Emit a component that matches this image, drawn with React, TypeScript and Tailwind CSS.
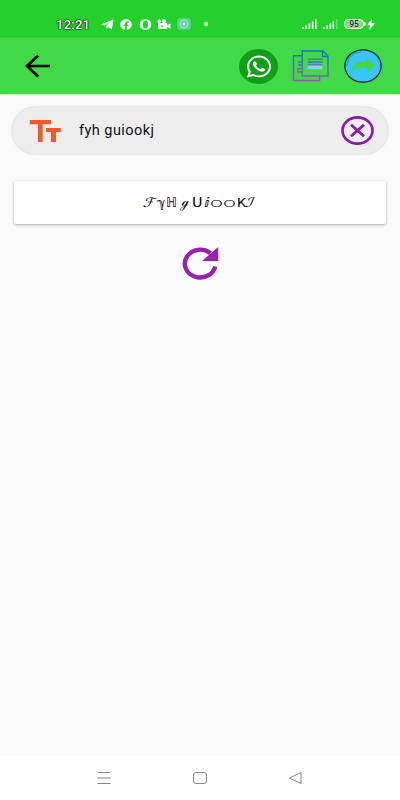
import React from 'react';
import { FaWhatsapp, FaFacebook } from 'react-icons/fa';

function StatusBar() {
  return (
    <div className="flex h-[38px] items-center bg-[#24d12c] pt-[10px] pl-[56px] text-white">
      <span className="w-[45px] text-[13px] leading-none font-medium tracking-[0.25px] whitespace-nowrap [text-shadow:0_0_1px_#000,0_0_1px_#000,0_0_2px_#000]">12:21</span>
      <svg className="h-[11px] w-[13px] shrink-0" viewBox="0 0 13 11" fill="#fff">
        <path d="M0 5.6 12.5 0.6 10.8 10.2 7.2 8.2 5.2 9.8 4.7 7.2 9.5 3 3.4 6.6Z" />
      </svg>
      <FaFacebook className="ml-[6px] h-[11px] w-[12px] shrink-0" preserveAspectRatio="none" />
      <svg className="ml-[7px] h-[11px] w-[13px] shrink-0" viewBox="0 0 13 11">
        <path fill="#fff" fillRule="evenodd" d="M6.5.2C10 .2 12.2 2.4 12.2 5.5S10 10.8 6.5 10.8.8 8.6.8 5.5 3 .2 6.5.2ZM6.5 1.5C4.7 1.5 3.8 3.2 3.8 5.5S4.7 9.5 6.5 9.5 9.2 7.8 9.2 5.5 8.3 1.5 6.5 1.5Z" />
      </svg>
      <svg className="ml-[5px] h-[11px] w-[14px] shrink-0" viewBox="0 0 14 11" fill="#fff">
        <circle cx="2.2" cy="2.2" r="1.7" /><circle cx="7" cy="2.2" r="2" />
        <path fillRule="evenodd" d="M1 4H10V6L13.5 4.4V9.6L10 8V10H1ZM4.5 6V8.4L7 7.2Z" />
      </svg>
      <svg className="ml-[6px] h-[12px] w-[14px] shrink-0" viewBox="0 0 14 12" fill="none">
        <rect x=".3" y=".3" width="13.2" height="11.4" rx="2.6" fill="#60cf9b" />
        <circle cx="7" cy="6" r="3.8" stroke="#a8ead0" />
        <path d="M7 4V8M5 6H9" stroke="#c9f5e5" />
      </svg>
      <i className="ml-[13px] h-[4px] w-[4px] shrink-0 rounded-full bg-[#e4ffe4]" />
      <svg className="ml-[94px] h-[10px] w-[36px] shrink-0" viewBox="0 0 36 10" fill="#e6ffe6">
        <path d="M0 8h1.6v2H0zM3.2 6.5h1.7V10H3.2zM6.5 4.5h1.7V10H6.5zM9.8 2.3h1.7V10H9.8zM13 .2h1.7V10H13zM21 8h1.6v2H21zM24.2 6.5h1.7V10h-1.7zM27.5 4.5h1.7V10h-1.7zM30.6 2.3h1.5V10h-1.5z" />
        <path fill="#65df69" d="M34 .2h1.6V10H34z" />
      </svg>
      <div className="ml-[6px] flex h-[10px] w-[20px] shrink-0 items-center justify-center rounded-[4px] border border-[#e6ffe6] bg-[#83df86] text-[8.5px] leading-none font-medium text-[#222] [text-shadow:0_0_1px_#fff]">95</div>
      <i className="h-[4px] w-[2px] shrink-0 rounded-r bg-[#d5ffd5]" />
      <svg className="ml-[1px] h-[11px] w-[8px] shrink-0" viewBox="0 0 8 11" fill="#fff"><path d="M5 0 0 6.2H3L2.2 11 8 4.3H4.4Z" /></svg>
    </div>
  );
}

function AppBar() {
  return (
    <header className="flex h-[56px] items-center bg-[#42d947] pl-[25px] shadow-[0_1px_2px_#b5f4ba]">
      <svg className="h-[24px] w-[26px]" viewBox="0 0 26 24" fill="none" stroke="#000" strokeWidth="2.7">
        <path d="M25 12H2M13.2 1.5 1.9 12 13.2 22.5" />
      </svg>
      <div className="ml-[188px] flex h-[35px] w-[39px] items-center justify-center rounded-[50%] bg-[#0f9f18]">
        <FaWhatsapp className="h-[25px] w-[24px] text-white" preserveAspectRatio="none" />
      </div>
      <svg className="ml-[14px] h-[32px] w-[37px]" viewBox="0 0 37 32" fill="none">
        <defs>
          <linearGradient id="paper" gradientUnits="userSpaceOnUse" x1="18" y1="0" x2="18" y2="32">
            <stop stopColor="#0875bd" /><stop offset=".5" stopColor="#526fbb" /><stop offset="1" stopColor="#a04fc0" />
          </linearGradient>
        </defs>
        <g stroke="url(#paper)" strokeWidth="1.4">
          <path d="M9.5 5.8H1.5V30.5H27.7V26.4M10.2 1H31L36 6V26H10.2ZM30.5 1V6.5H36" />
          <path d="M6 12H10M6 15H10M10 18.5H6V22H10" />
          <path d="M15.8 9.2H30.5M15.8 12H30.5M15.8 14.8H30.5" strokeWidth="1.3" />
        </g>
        <path d="M15.8 15.6H30.5V19.2H15.8Z" fill="#9bcce3" />
      </svg>
      <svg className="ml-[15px] h-[34px] w-[38px]" viewBox="0 0 38 34">
        <ellipse cx="19" cy="17" rx="18.1" ry="16.2" fill="#39c5f7" stroke="#172b31" strokeWidth="1.3" />
        <path d="M3 17C3 9 9 3 17 3" fill="none" stroke="#26a9b5" strokeWidth="1.5" />
        <path d="M7.5 22C9 14.5 14 12.2 22 13V9.5L31.5 16 23 22.8V19C17 18 12 19 7.5 22Z" fill="#42d947" />
      </svg>
    </header>
  );
}

function SearchField() {
  return (
    <div className="mx-[12px] mt-[13px] flex h-[47px] items-center rounded-full bg-[#ededed] pl-[17px] shadow-[0_0_2px_#bbb]">
      <svg className="h-[24px] w-[33px]" viewBox="0 0 33 24" fill="#f15a28">
        <path d="M.8 1H22V5.2H13.7V23H8.9V5.2H.8ZM17 9H31.8V13H27V23H22V13H17Z" />
      </svg>
      <span className="ml-[17px] w-[262px] pt-px text-[14.5px] leading-none tracking-[0.45px] text-[#111]">fyh guiookj</span>
      <svg className="h-[29px] w-[33px] shrink-0" viewBox="0 0 33 29" fill="none" stroke="#8d1ba4">
        <ellipse cx="16.5" cy="14.5" rx="15" ry="13.2" strokeWidth="2.7" />
        <path d="M10 8.7 23 20.3M23 8.7 10 20.3" strokeWidth="2.8" />
      </svg>
    </div>
  );
}

const letter = "inline-block shrink-0 origin-left whitespace-pre";

function StyledText() {
  return (
    <div className="mx-[14px] mt-[27px] flex h-[43px] items-center rounded-[2px] bg-white pl-[130px] font-['DejaVu_Sans',serif] text-[13px] leading-[18px] text-black shadow-[0_1px_3px_#aaa]">
      <span className={letter + " w-[13px] scale-x-110 -skew-x-[18deg]"}>ℱ</span>
      <span className={letter + " w-[9px] scale-x-90"}>ℽ</span>
      <span className={letter + " w-[15px]"}>ℍ </span>
      <span className={letter + " w-[11px] pb-[2px] text-[12px] scale-x-110 font-['DejaVu_Serif',serif]"}>ℊ</span>
      <span className={letter + " w-[12px] scale-x-110"}>ᑌ</span>
      <span className={letter + " w-[6px] scale-x-125"}>ⅈ</span>
      <span className={letter + " w-[13px] pb-[2px] text-[14.5px] scale-x-[1.6] font-[Lato,sans-serif] font-light"}>o</span>
      <span className={letter + " w-[14px] pb-[2px] text-[14.5px] scale-x-[1.6] font-[Lato,sans-serif] font-light"}>o</span>
      <span className={letter + " w-[9px] scale-x-110 font-[Roboto,sans-serif]"}>K</span>
      <span className={letter + " w-[12px] scale-x-125 -skew-x-[18deg]"}>ℐ</span>
    </div>
  );
}

export default function App() {
  return (
    <main className="flex h-[800px] w-[400px] flex-col overflow-hidden bg-[#fafafa] font-[Roboto,sans-serif]">
      <StatusBar />
      <AppBar />
      <SearchField />
      <StyledText />
      <svg className="mt-[22px] ml-[181px] h-[34px] w-[38px]" viewBox="0 0 38 34">
        <path d="M34.3 20.5A15.4 13.9 0 1 1 29.5 7.2" fill="none" stroke="#9423ae" strokeWidth="4.4" />
        <path d="M37.2 1V15H21Z" fill="#9423ae" />
      </svg>
      <nav className="mt-auto flex h-[44px] items-center bg-white pl-[97px]">
        <svg className="h-[14px] w-[14px]" viewBox="0 0 14 14" fill="none" stroke="#858585"><path d="M.5 1.5H13.5M.5 7H13.5M.5 12.5H13.5" /></svg>
        <i className="ml-[82px] h-[12px] w-[14px] rounded-[3px] border border-[#858585]" />
        <svg className="ml-[81px] h-[14px] w-[15px]" viewBox="0 0 15 14" fill="none" stroke="#858585"><path d="M13 1.5V12.5L1.5 7Z" strokeLinejoin="round" /></svg>
      </nav>
    </main>
  );
}
